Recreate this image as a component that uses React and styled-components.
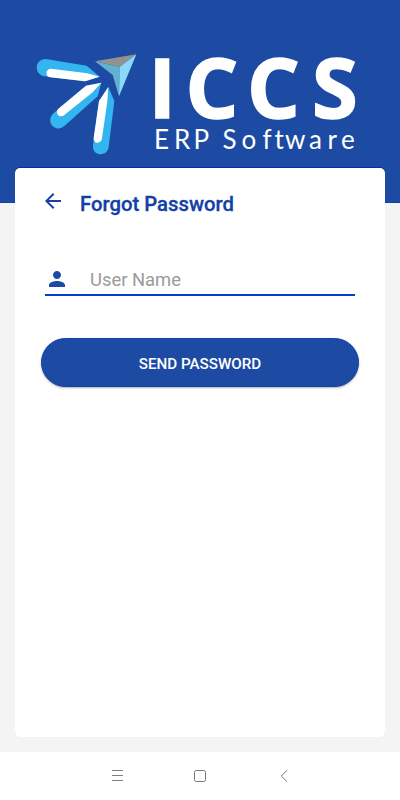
import styled, { createGlobalStyle } from 'styled-components';

function App() {
    return (
        <Screen>
            <GlobalStyle />
            <Header>
                <Logo />
            </Header>
            <Card>
                <TitleRow>
                    <BackButton aria-label="Back">
                        <svg width="24" height="24" viewBox="0 0 24 24" fill="#1a3fa8">
                            <path d="M20 11H7.83l5.59-5.59L12 4l-8 8 8 8 1.41-1.41L7.83 13H20v-2z" />
                        </svg>
                    </BackButton>
                    <Title>Forgot Password</Title>
                </TitleRow>
                <Field>
                    <svg width="24" height="24" viewBox="0 0 24 24" fill="#1c4aa4">
                        <path d="M12 12c2.21 0 4-1.79 4-4s-1.79-4-4-4-4 1.79-4 4 1.79 4 4 4zm0 2c-2.67 0-8 1.34-8 4v2h16v-2c0-2.66-5.33-4-8-4z" />
                    </svg>
                    <Input placeholder="User Name" />
                </Field>
                <SendButton>SEND PASSWORD</SendButton>
            </Card>
            <NavBar>
                <svg width="12" height="12" viewBox="0 0 12 12" stroke="#808080">
                    <path d="M1 0.5h11M1 5.5h11M1 10.5h11" />
                </svg>
                <svg width="12" height="12" viewBox="0 0 12 12" fill="none" stroke="#747474">
                    <rect x="0.5" y="0.5" width="11" height="11" rx="2" />
                </svg>
                <svg width="12" height="12" viewBox="0 0 12 12" fill="none" stroke="#747474">
                    <path d="M10 0.3L4.3 6L10 11.7" />
                </svg>
            </NavBar>
        </Screen>
    )
}

export default App

function Logo() {
    return (
        <svg width="340" height="115" viewBox="0 0 340 115">
            <g transform="scale(0.33333)">
                <path fill="#33b5ef" d="M47 42L170 62L209 95L165 109L43 94C11 88 13 43 47 42Z" />
                <path fill="#fff" d="M63 71L172 85L209 95L165 109L60 97C45 94 46 71 63 71Z" />
                <path fill="#33b5ef" d="M214 113L203 154L103 243C78 265 45 232 69 206L168 122Z" />
                <path fill="#fff" d="M214 113L188 142L102 211C88 221 73 203 85 191L168 122Z" />
                <path fill="#33b5ef" d="M235 126L253 168L236 306C232 336 187 335 189 302L207 168Z" />
                <path fill="#fff" d="M235 126L232 169L216 280C214 298 189 297 191 278L207 168Z" />
                <path fill="#929292" d="M319 28L195 49L269 66Z" />
                <path fill="#62b1cf" d="M195 49L269 66L267 154L248 90Z" />
                <path fill="#8ad9fb" d="M319 28L269 66L267 154Z" />
            </g>
            <Brand x="118.5 155.5 217 282" y="73">ICCS</Brand>
            <Tagline y="104" x="124 144 163.5 180 192.5 211.5 232.5 244.5 255 279 297.5 311">ERP Software</Tagline>
        </svg>
    )
}

const GlobalStyle = createGlobalStyle`
    body {
        margin: 0;
        font-family: Roboto, sans-serif;
    }
`

const Screen = styled.div`
    height: 800px;
    display: flex;
    flex-direction: column;
    background-color: #f4f4f4;
    overflow: hidden;
`

const Header = styled.header`
    height: 203px;
    flex-shrink: 0;
    box-sizing: border-box;
    padding: 45px 30px 0;
    background-color: #1d4ba3;
    border-bottom: 1px solid #1440a4;
`

const Brand = styled.text`
    font: 700 83px 'Open Sans', sans-serif;
    fill: #fff;
    stroke: #fff;
    stroke-width: 1.5px;
`

const Tagline = styled.text`
    font: 400 26px Lato, sans-serif;
    font-variant-ligatures: none;
    fill: #fff;
`

const Card = styled.main`
    flex: 1;
    display: flex;
    flex-direction: column;
    box-sizing: border-box;
    margin: -35px 15px 15px;
    padding: 21px 26px;
    background-color: #fff;
    border-radius: 5px;
    box-shadow: 0 -1px 0 #0c2ba4;
`

const TitleRow = styled.div`
    display: flex;
    align-items: center;
    height: 28px;
`

const BackButton = styled.button`
    display: flex;
    margin: -4px 15px 0 0;
    padding: 0;
    border: none;
    background: none;
`

const Title = styled.h1`
    margin: 2px 0 0;
    font-size: 20.3px;
    font-weight: 500;
    color: #1340a4;
    -webkit-text-stroke: 0.3px #1340a4;
`

const Field = styled.label`
    display: flex;
    align-items: center;
    box-sizing: border-box;
    height: 32px;
    margin: 47px 4px 0;
    border-bottom: 2px solid #0540c8;
`

const Input = styled.input`
    flex: 1;
    margin-left: 21px;
    padding: 1px 0 0;
    border: none;
    outline: none;
    background: none;
    font: 400 18.4px Roboto, sans-serif;

    &::placeholder {
        color: #9b9b9b;
    }
`

const SendButton = styled.button`
    height: 49px;
    margin: 42px 0 0;
    padding: 3px 0 0;
    border: 1px solid #1240a8;
    border-radius: 25px;
    background-color: #1d4ba3;
    box-shadow: 0 1px 2px rgba(0, 0, 0, 0.3);
    color: #fff;
    font: 500 15.2px Roboto, sans-serif;
`

const NavBar = styled.nav`
    display: flex;
    justify-content: center;
    align-items: center;
    gap: 71px;
    height: 48px;
    flex-shrink: 0;
    background-color: #fff;
`
